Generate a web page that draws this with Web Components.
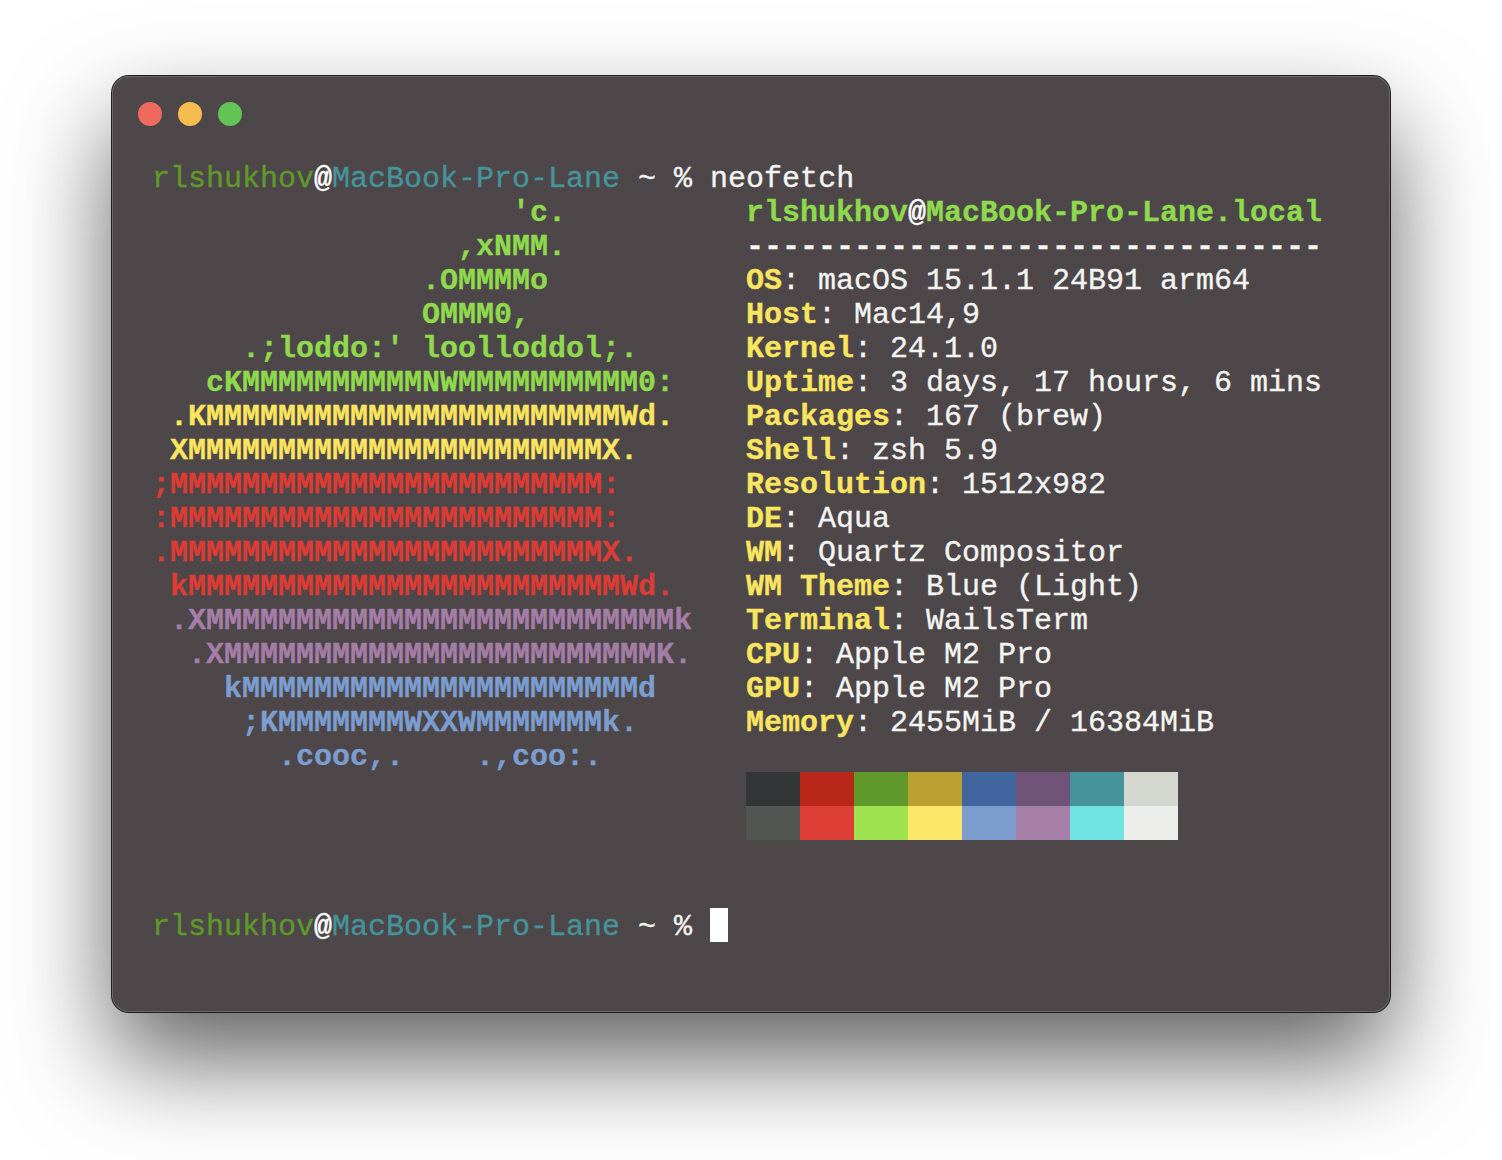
<!DOCTYPE html>
<html>
<head>
<meta charset="utf-8">
<title>neofetch</title>
<style>
  html, body { margin: 0; height: 100%; background: #fff; }
  body { overflow: hidden; }
</style>
</head>
<body>
<term-window>
  <term-prompt command="neofetch"></term-prompt>
  <term-fetch></term-fetch>
  <term-prompt cursor style="margin-top: 68px"></term-prompt>
</term-window>

<script>
const LOGO = [
  ['#8fd94d', "                    'c."],
  ['#8fd94d', '                 ,xNMM.'],
  ['#8fd94d', '               .OMMMMo'],
  ['#8fd94d', '               OMMM0,'],
  ['#8fd94d', "     .;loddo:' loolloddol;."],
  ['#8fd94d', '   cKMMMMMMMMMMNWMMMMMMMMMM0:'],
  ['#f9e55f', ' .KMMMMMMMMMMMMMMMMMMMMMMMWd.'],
  ['#f9e55f', ' XMMMMMMMMMMMMMMMMMMMMMMMX.'],
  ['#dc3c34', ';MMMMMMMMMMMMMMMMMMMMMMMM:'],
  ['#dc3c34', ':MMMMMMMMMMMMMMMMMMMMMMMM:'],
  ['#dc3c34', '.MMMMMMMMMMMMMMMMMMMMMMMMX.'],
  ['#dc3c34', ' kMMMMMMMMMMMMMMMMMMMMMMMMWd.'],
  ['#a57ea8', ' .XMMMMMMMMMMMMMMMMMMMMMMMMMMk'],
  ['#a57ea8', '  .XMMMMMMMMMMMMMMMMMMMMMMMMK.'],
  ['#7b9dcf', '    kMMMMMMMMMMMMMMMMMMMMMMd'],
  ['#7b9dcf', '     ;KMMMMMMMWXXWMMMMMMMk.'],
  ['#7b9dcf', '       .cooc,.    .,coo:.'],
];

const INFO = [
  ['OS', 'macOS 15.1.1 24B91 arm64'],
  ['Host', 'Mac14,9'],
  ['Kernel', '24.1.0'],
  ['Uptime', '3 days, 17 hours, 6 mins'],
  ['Packages', '167 (brew)'],
  ['Shell', 'zsh 5.9'],
  ['Resolution', '1512x982'],
  ['DE', 'Aqua'],
  ['WM', 'Quartz Compositor'],
  ['WM Theme', 'Blue (Light)'],
  ['Terminal', 'WailsTerm'],
  ['CPU', 'Apple M2 Pro'],
  ['GPU', 'Apple M2 Pro'],
  ['Memory', '2455MiB / 16384MiB'],
];

const DARK = ['#323637', '#b92718', '#60992b', '#bba032', '#41659f', '#71537a', '#45949c', '#d4d6d0'];
const BRIGHT = ['#545653', '#dd3f36', '#9fe350', '#fae768', '#7c9ccd', '#a67fa9', '#6fe2e2', '#ecedea'];

class TermWindow extends HTMLElement {
  constructor() {
    super();
    this.attachShadow({ mode: 'open' }).innerHTML = `
      <style>
        :host {
          -webkit-text-stroke: .35px;
          background: #4d4749;
          border-radius: 17px;
          box-shadow: 0 0 0 1px #1f1d1e, inset 0 0 0 1px #6b6769, 0 48px 100px rgba(0, 0, 0, .62);
          box-sizing: border-box;
          color: #f4f4f2;
          display: block;
          font: 30px/34px "Liberation Mono", monospace;
          height: 936px;
          margin: 76px 0 0 112px;
          padding: 26px 0 0 40px;
          width: 1278px;
        }
        .lights {
          display: flex;
          gap: 16px;
          margin: 0 0 34px -14px;
        }
        .lights i {
          border-radius: 50%;
          height: 24px;
          width: 24px;
        }
      </style>
      <div class="lights">
        <i style="background:#ee6a5f"></i>
        <i style="background:#f5bd4f"></i>
        <i style="background:#61c454"></i>
      </div>
      <slot></slot>
    `;
  }
}

class TermPrompt extends HTMLElement {
  constructor() {
    super();
    const cmd = this.getAttribute('command');
    this.attachShadow({ mode: 'open' }).innerHTML = `
      <style>
        :host { display: block; height: 34px; }
        .line { padding-top: 2px; white-space: pre; }
        .user { color: #60992b; }
        .at { color: #fff; font-weight: bold; }
        .host { color: #45949c; }
        .cursor { background: #fff; display: inline-block; height: 34px; margin-top: -2px; vertical-align: top; width: 18px; }
      </style>
      <div class="line"><span class="user">rlshukhov</span><span class="at">@</span><span class="host">MacBook-Pro-Lane</span> ~ % ${cmd ? cmd : ''}${this.hasAttribute('cursor') ? '<span class="cursor"></span>' : ''}</div>
    `;
  }
}

class TermFetch extends HTMLElement {
  constructor() {
    super();
    const logo = LOGO.map(([c, t]) => `<div style="color:${c}">${t}</div>`).join('');
    const info = INFO.map(([k, v]) => `<div><b>${k}</b>: ${v}</div>`).join('');
    const swatches = DARK.concat(BRIGHT).map((c) => `<i style="background:${c}"></i>`).join('');
    this.attachShadow({ mode: 'open' }).innerHTML = `
      <style>
        :host {
          display: grid;
          grid-template-columns: 594px 1fr;
          padding-top: 2px;
        }
        .logo { font-weight: bold; white-space: pre; }
        .info { white-space: pre; }
        b { color: #f9e55f; }
        .title { color: #8fd94d; font-weight: bold; }
        .title span { color: #fff; }
        .rule { font-weight: bold; }
        .swatches {
          display: grid;
          grid-template-columns: repeat(8, 54px);
          grid-auto-rows: 34px;
          margin-top: 32px;
        }
      </style>
      <div class="logo">${logo}</div>
      <div class="info"><div class="title">rlshukhov<span>@</span>MacBook-Pro-Lane.local</div><div class="rule">${'-'.repeat(32)}</div>${info}<div class="swatches">${swatches}</div></div>
    `;
  }
}

customElements.define('term-window', TermWindow);
customElements.define('term-prompt', TermPrompt);
customElements.define('term-fetch', TermFetch);
</script>
</body>
</html>
